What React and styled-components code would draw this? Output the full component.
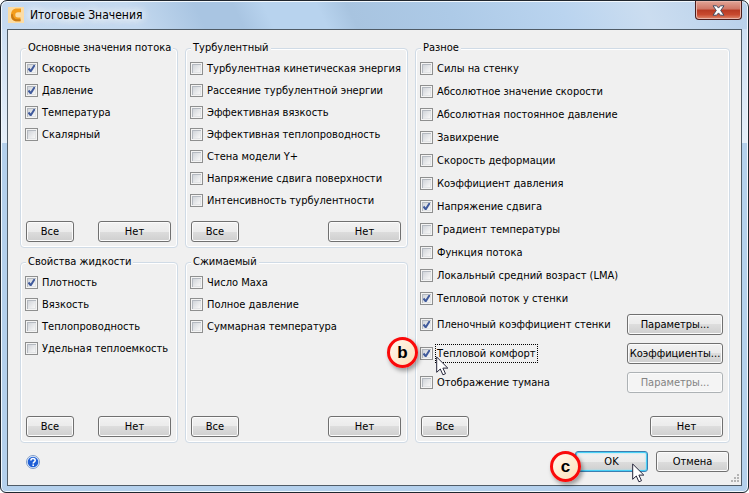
import React, {useState} from 'react';
import styled, {createGlobalStyle, css} from 'styled-components';

const GlobalStyle = createGlobalStyle`
  * {
    box-sizing: border-box;
  }

  body {
    margin: 0;
    background-color: #fff;
    color: #000;
    font-family: "DejaVu Sans Condensed", "DejaVu Sans", sans-serif;
    font-size: 11px;
    line-height: 14px;
  }
`;

const Window = styled.main`
  min-height: 100vh;
  display: flex;
  flex-direction: column;
  padding: 0 6px 6px 6px;
  border: 1px solid #20262e;
  border-radius: 7px 7px 6px 6px;
  box-shadow: inset 0 0 0 1px #f2f8fd;
  background:
    linear-gradient(65deg, #c6daf0, #c4d9ef 18%, #a9c5e2 27%, #a9c5e2 32%, #b8d3ee 36%, #b8d3ee 43%, #a8c4e0 47%, #adcae7 60%, #bad4ef 75%, #cbddf0 86%, #b8d0ea) 0 0 / 100% 28px no-repeat,
    linear-gradient(#c6daf0, #e6eff9 142px, #b4d0ec 142px, #b4d0ec);
`;

const TitleBar = styled.header`
  height: 28px;
  display: flex;
  align-items: center;
  gap: 6px;
  padding-left: 1px;
`;

const Title = styled.h1`
  margin: 0;
  font-size: 12px;
  font-weight: normal;
  line-height: 16px;
  text-shadow: 0 0 8px #fff, 0 0 8px #fff, 0 0 12px #fff;
`;

const CloseBtn = styled.button`
  align-self: flex-start;
  width: 47px;
  height: 19px;
  margin-left: auto;
  padding: 0;
  display: flex;
  justify-content: center;
  align-items: center;
  border: 1px solid #4b1d1c;
  border-top: none;
  border-radius: 0 0 4px 4px;
  box-shadow: inset 0 0 0 1px #e9b4a9;
  background: linear-gradient(#e2a597, #cf7665 45%, #b83a23 50%, #c8492f 75%, #e0896d);
`;

const Client = styled.form`
  position: relative;
  flex: 1;
  display: flex;
  flex-direction: column;
  gap: 8px;
  padding: 11px 11px 13px 12px;
  border: 1px solid #505c67;
  background-color: #f0f0f0;
`;

const Groups = styled.div`
  flex: 1;
  display: grid;
  grid-template-columns: 158fr 223fr 315fr;
  grid-template-rows: 207fr 188fr;
  gap: 7px;
`;

const Group = styled.fieldset`
  min-width: 0;
  margin: 0;
  padding: 2px 6px 5px 4px;
  display: flex;
  flex-direction: column;
  border: 1px solid #d0dbe6;
  border-radius: 4px;
  box-shadow: inset 0 0 0 1px #fff;

  ${({$tall}) => $tall && css`
    grid-column: 3;
    grid-row: 1 / span 2;
  `}
`;

const Legend = styled.legend`
  margin-left: 1px;
  padding: 0 2px;
  background-color: #f0f0f0;
  white-space: nowrap;
`;

const Row = styled.div`
  position: relative;
  height: ${({$size}) => $size}px;
  display: flex;
  align-items: center;
  gap: 4px;
  white-space: nowrap;

  & > button {
    margin-left: auto;
  }
`;

const Check = styled.input`
  appearance: none;
  flex: none;
  width: 13px;
  height: 13px;
  margin: 0;
  border: 1px solid #8e8f8f;
  box-shadow: inset 0 0 0 1px #f4f4f4, inset 1px 1px 0 1px #b4b9c0, inset -1px -1px 0 1px #e2e4e6;
  background: linear-gradient(135deg, #c6cbd2, #f6f6f6 80%);

  &:checked {
    background:
      url("data:image/svg+xml,%3Csvg xmlns='http://www.w3.org/2000/svg' viewBox='0 0 11 11'%3E%3Cpath d='M2.5 5.5L4.7 8.2L8.7 2' fill='none' stroke='%23405a9c' stroke-width='2'/%3E%3C/svg%3E") center / 11px 11px no-repeat,
      linear-gradient(135deg, #c6cbd2, #f6f6f6 80%);
  }
`;

const CheckLabel = styled.label`
  line-height: 15px;

  ${({$focused}) => $focused && css`
    outline: 1px dotted #000;
    outline-offset: 1px;
  `}
`;

const Actions = styled.div`
  margin-top: auto;
  padding-left: 1px;
  display: flex;
  justify-content: space-between;
`;

const Button = styled.button`
  width: ${({$width}) => $width}px;
  height: 21px;
  padding: 0;
  border: 1px solid #707070;
  border-radius: 3px;
  box-shadow: inset 0 0 0 1px #fbfbfb;
  background: linear-gradient(#f2f2f2, #ebebeb 50%, #dddddd 50%, #cfcfcf);
  color: #000;
  font: inherit;
  white-space: nowrap;

  &:disabled {
    border-color: #adb2b5;
    background: #f4f4f4;
    color: #838383;
  }

  ${({$primary}) => $primary && css`
    border-color: #3c7fb1;
    box-shadow: inset 0 0 0 1px #48d0f6, inset 0 0 2px 1px #8fe2fa;
  `}
`;

const Footer = styled.footer`
  display: flex;
  align-items: center;
  gap: 8px;
  padding-right: 1px;
`;

const HelpBtn = styled.button`
  width: 14px;
  height: 14px;
  margin: 0 auto 0 6px;
  padding: 0;
  border: none;
  background: none;

  svg {
    display: block;
  }
`;

const OkWrap = styled.div`
  position: relative;
  display: flex;
`;

const Badge = styled.span`
  position: absolute;
  left: ${({$x}) => $x}px;
  top: ${({$y}) => $y}px;
  z-index: 1;
  width: 31px;
  height: 31px;
  display: flex;
  justify-content: center;
  align-items: center;
  border: 3px solid #fa0a0a;
  border-radius: 50%;
  box-shadow: 2px 3px 4px rgba(0, 0, 0, .35);
  background: linear-gradient(135deg, #fff8ee, #fddfb8);
  font: bold 17px/20px "Liberation Sans", sans-serif;
`;

const Pointer = styled.svg`
  position: absolute;
  left: ${({$x}) => $x}px;
  top: ${({$y}) => $y}px;
  z-index: 1;
  pointer-events: none;
`;

const Grip = styled.svg`
  position: absolute;
  right: 2px;
  bottom: 2px;
`;

const GROUPS = [
  {
    title: 'Основные значения потока',
    items: ['Скорость', 'Давление', 'Температура', 'Скалярный'],
  },
  {
    title: 'Турбулентный',
    items: [
      'Турбулентная кинетическая энергия',
      'Рассеяние турбулентной энергии',
      'Эффективная вязкость',
      'Эффективная теплопроводность',
      'Стена модели Y+',
      'Напряжение сдвига поверхности',
      'Интенсивность турбулентности',
    ],
  },
  {
    title: 'Разное',
    tall: true,
    items: [
      'Силы на стенку',
      'Абсолютное значение скорости',
      'Абсолютная постоянное давление',
      'Завихрение',
      'Скорость деформации',
      'Коэффициент давления',
      'Напряжение сдвига',
      'Градиент температуры',
      'Функция потока',
      'Локальный средний возраст (LMA)',
      'Тепловой поток у стенки',
      'Пленочный коэффициент стенки',
      'Тепловой комфорт',
      'Отображение тумана',
    ],
  },
  {
    title: 'Свойства жидкости',
    items: ['Плотность', 'Вязкость', 'Теплопроводность', 'Удельная теплоемкость'],
  },
  {
    title: 'Сжимаемый',
    items: ['Число Маха', 'Полное давление', 'Суммарная температура'],
  },
];

const CHECKED = [
  'Скорость',
  'Давление',
  'Температура',
  'Плотность',
  'Напряжение сдвига',
  'Тепловой поток у стенки',
  'Пленочный коэффициент стенки',
  'Тепловой комфорт',
];

// rows that open a further dialog
const SETTINGS = {
  'Пленочный коэффициент стенки': 'Параметры...',
  'Тепловой комфорт': 'Коэффициенты...',
  'Отображение тумана': 'Параметры...',
};

const FOCUSED = 'Тепловой комфорт';

const Cursor = ({x, y}) => (
  <Pointer $x={x} $y={y} width="14" height="20" viewBox="0 0 14 20" aria-hidden="true">
    <path d="M.7 1v15.3l3.6-3.3 2.6 5.8 2.6-1.1-2.6-5.6h4.9z" fill="#fff" stroke="#25253a" />
  </Pointer>
);

const AppIcon = () => (
  <svg width="16" height="16" viewBox="0 0 16 16" aria-hidden="true">
    <rect width="16" height="16" fill="#fbdca4" />
    <path d="M13 1.500H9C5 1.500 3 4 3 8s2 6.300 6 6.300h3.500V10.500H10C8 10.500 7.300 9.700 7.300 8S8 5.300 10 5.300h3z" fill="#f39c1b" />
    <path d="M3 7.500c0 4.500 2 6.800 6 6.800h3.500v-2H9.500C6.500 12.300 5 10.500 4.800 7z" fill="#c97a14" />
  </svg>
);

const App = () => {
  const [checked, setChecked] = useState(CHECKED);

  const toggle = (item) => {
    setChecked(checked.includes(item) ? checked.filter((name) => name !== item) : [...checked, item]);
  };

  const selectAll = (items) => setChecked([...new Set([...checked, ...items])]);
  const selectNone = (items) => setChecked(checked.filter((name) => !items.includes(name)));

  return (
    <>
      <GlobalStyle />
      <Window>
        <TitleBar>
          <AppIcon />
          <Title>Итоговые Значения</Title>
          <CloseBtn type="button" aria-label="Закрыть">
            <svg width="13" height="11" viewBox="0 0 13 11">
              <path d="M1 .8h3.600l1.900 2.300L8.400.8H12L8.700 5.500l3.300 4.700H8.400L6.500 7.900l-1.900 2.300H1l3.300-4.700z" fill="#fff" stroke="#454c60" />
            </svg>
          </CloseBtn>
        </TitleBar>

        <Client onSubmit={(e) => e.preventDefault()}>
          <Groups>
            {GROUPS.map(({title, tall, items}, g) => (
              <Group key={title} $tall={tall}>
                <Legend>{title}</Legend>
                {items.map((item, i) => {
                  const id = `item-${g}-${i}`;
                  const size = tall ? 23 : 22;
                  return (
                    <Row key={item} $size={SETTINGS[item] ? 29 : size}>
                      <Check
                        type="checkbox"
                        id={id}
                        checked={checked.includes(item)}
                        onChange={() => toggle(item)}
                      />
                      <CheckLabel htmlFor={id} $focused={item === FOCUSED}>{item}</CheckLabel>
                      {SETTINGS[item] && (
                        <Button type="button" $width={96} disabled={!checked.includes(item)}>
                          {SETTINGS[item]}
                        </Button>
                      )}
                      {item === FOCUSED && (
                        <>
                          <Badge $x={-33} $y={-2}>b</Badge>
                          <Cursor x={16} y={17} />
                        </>
                      )}
                    </Row>
                  );
                })}
                <Actions>
                  <Button type="button" $width={48} onClick={() => selectAll(items)}>Все</Button>
                  <Button type="button" $width={73} onClick={() => selectNone(items)}>Нет</Button>
                </Actions>
              </Group>
            ))}
          </Groups>

          <Footer>
            <HelpBtn type="button" aria-label="Справка">
              <svg width="14" height="14" viewBox="0 0 14 14">
                <circle cx="7" cy="7" r="6.500" fill="#e8f1fc" stroke="#7f9cc8" />
                <circle cx="7" cy="7" r="5.300" fill="#1f5fd6" />
                <path d="M4.900 5.600C4.900 4.200 5.800 3.500 7 3.500s2.200.7 2.200 1.900C9.200 6.800 7.200 6.900 7.200 8.500" fill="none" stroke="#fff" strokeWidth="1.500" />
                <rect x="6.400" y="9.400" width="1.600" height="1.600" fill="#fff" />
              </svg>
            </HelpBtn>
            <OkWrap>
              <Button type="submit" $width={73} $primary>OK</Button>
              <Badge $x={-25} $y={0}>c</Badge>
              <Cursor x={57} y={12} />
            </OkWrap>
            <Button type="button" $width={73}>Отмена</Button>
          </Footer>

          <Grip width="9" height="9" viewBox="0 0 9 9" aria-hidden="true">
            <path d="M7 1h2M4 4h2M7 4h2M1 7h2M4 7h2M7 7h2" stroke="#b4b4b4" strokeWidth="2" />
          </Grip>
        </Client>
      </Window>
    </>
  );
};

export default App;
